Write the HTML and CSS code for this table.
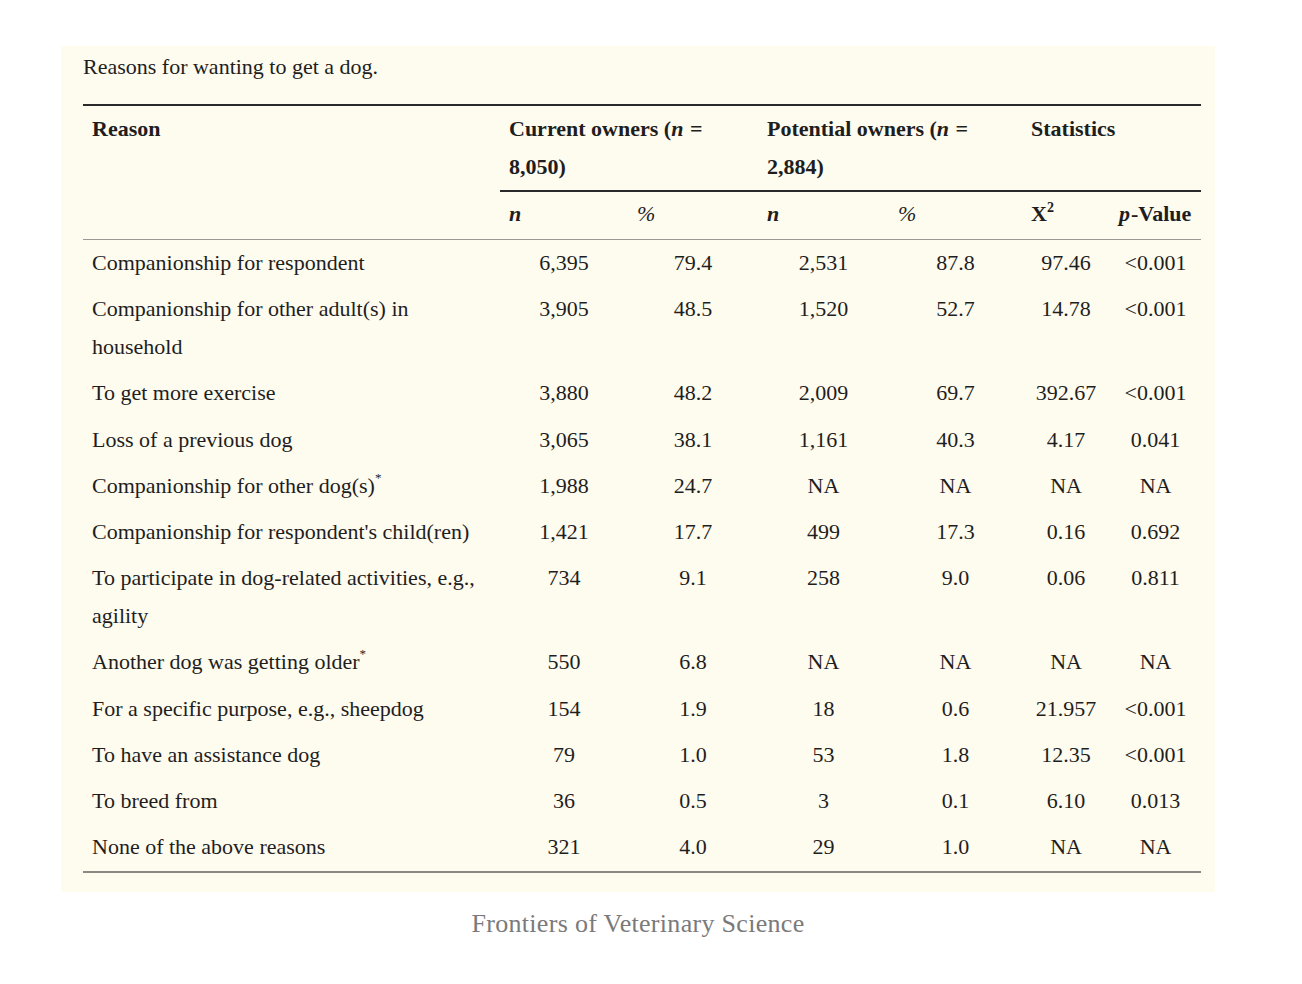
FILE: index.html
```html
<!DOCTYPE html>
<html lang="en">
<head>
<meta charset="utf-8">
<title>Reasons for wanting to get a dog</title>
<link rel="stylesheet" href="styles.css">
</head>
<body>
<div class="page">
  <div class="panel">
    <div class="caption">Reasons for wanting to get a dog.</div>
    <table class="data">
      <colgroup>
        <col class="c-reason">
        <col class="c-n1">
        <col class="c-p1">
        <col class="c-n2">
        <col class="c-p2">
        <col class="c-x">
        <col class="c-pv">
      </colgroup>
      <thead>
        <tr class="h1">
          <th rowspan="2" class="reason-h">Reason</th>
          <th colspan="2" class="grp">Current owners (<i>n</i> = 8,050)</th>
          <th colspan="2" class="grp">Potential owners (<i>n</i> = 2,884)</th>
          <th colspan="2" class="grp">Statistics</th>
        </tr>
        <tr class="h2">
          <th><i>n</i></th>
          <th class="it">%</th>
          <th><i>n</i></th>
          <th class="it">%</th>
          <th>X<sup>2</sup></th>
          <th><i>p</i>-Value</th>
        </tr>
      </thead>
      <tbody>
        <tr><td>Companionship for respondent</td><td>6,395</td><td>79.4</td><td>2,531</td><td>87.8</td><td>97.46</td><td>&lt;0.001</td></tr>
        <tr><td>Companionship for other adult(s) in household</td><td>3,905</td><td>48.5</td><td>1,520</td><td>52.7</td><td>14.78</td><td>&lt;0.001</td></tr>
        <tr><td>To get more exercise</td><td>3,880</td><td>48.2</td><td>2,009</td><td>69.7</td><td>392.67</td><td>&lt;0.001</td></tr>
        <tr><td>Loss of a previous dog</td><td>3,065</td><td>38.1</td><td>1,161</td><td>40.3</td><td>4.17</td><td>0.041</td></tr>
        <tr><td>Companionship for other dog(s)<sup class="ast">*</sup></td><td>1,988</td><td>24.7</td><td>NA</td><td>NA</td><td>NA</td><td>NA</td></tr>
        <tr><td>Companionship for respondent's child(ren)</td><td>1,421</td><td>17.7</td><td>499</td><td>17.3</td><td>0.16</td><td>0.692</td></tr>
        <tr><td>To participate in dog-related activities, e.g., agility</td><td>734</td><td>9.1</td><td>258</td><td>9.0</td><td>0.06</td><td>0.811</td></tr>
        <tr><td>Another dog was getting older<sup class="ast">*</sup></td><td>550</td><td>6.8</td><td>NA</td><td>NA</td><td>NA</td><td>NA</td></tr>
        <tr><td>For a specific purpose, e.g., sheepdog</td><td>154</td><td>1.9</td><td>18</td><td>0.6</td><td>21.957</td><td>&lt;0.001</td></tr>
        <tr><td>To have an assistance dog</td><td>79</td><td>1.0</td><td>53</td><td>1.8</td><td>12.35</td><td>&lt;0.001</td></tr>
        <tr><td>To breed from</td><td>36</td><td>0.5</td><td>3</td><td>0.1</td><td>6.10</td><td>0.013</td></tr>
        <tr class="last"><td>None of the above reasons</td><td>321</td><td>4.0</td><td>29</td><td>1.0</td><td>NA</td><td>NA</td></tr>
      </tbody>
    </table>
  </div>
  <div class="footer">Frontiers of Veterinary Science</div>
</div>
</body>
</html>
```

FILE: styles.css
```css
html, body {
  margin: 0;
  padding: 0;
  background: #ffffff;
}

.page {
  padding: 46px 0 0 61px;
  width: 1154px;
}

.panel {
  background: #fefbef;
  padding: 6px 14px 19px 22px;
  font-family: "Liberation Serif", "Times New Roman", serif;
  color: #1e1e1e;
}

.caption {
  font-size: 22px;
  line-height: 30px;
  margin-bottom: 22px;
}

.data {
  width: 1118px;
  table-layout: fixed;
  border-collapse: collapse;
  font-size: 22px;
  line-height: 38px;
}

.c-reason { width: 417px; }
.c-n1 { width: 128px; }
.c-p1 { width: 130px; }
.c-n2 { width: 131px; }
.c-p2 { width: 133px; }
.c-x { width: 88px; }
.c-pv { width: 91px; }

.data thead tr.h1 th {
  border-top: 2px solid #2a2a2a;
  padding: 4px 9px 4px 9px;
}

.data thead tr.h1 th.grp {
  border-bottom: 2px solid #2a2a2a;
}

.data th {
  text-align: left;
  vertical-align: top;
  font-weight: bold;
}

.data th i {
  padding-right: 1px;
}

.data thead tr.h2 th {
  padding: 3px 9px 6px 9px;
  border-bottom: 1px solid #9a9894;
}

.data th.reason-h {
  border-bottom: 1px solid #9a9894;
}

.data th.it {
  font-style: italic;
  font-weight: normal;
}

.data th sup {
  font-size: 14px;
  line-height: 0;
  vertical-align: 9px;
}

.data td {
  padding: 4.1px 9px 4.1px 9px;
  vertical-align: top;
  text-align: center;
}

.data td:first-child {
  text-align: left;
}

.data tr.last td {
  padding-bottom: 5px;
  border-bottom: 2px solid #8c8984;
}

.ast {
  font-size: 13px;
  line-height: 0;
  vertical-align: 11px;
  margin-left: 0;
}

.footer {
  margin-top: 14px;
  text-align: center;
  font-family: "Liberation Serif", "Times New Roman", serif;
  font-size: 26px;
  line-height: 36px;
  letter-spacing: 0.3px;
  color: #7a7a7a;
}
```
